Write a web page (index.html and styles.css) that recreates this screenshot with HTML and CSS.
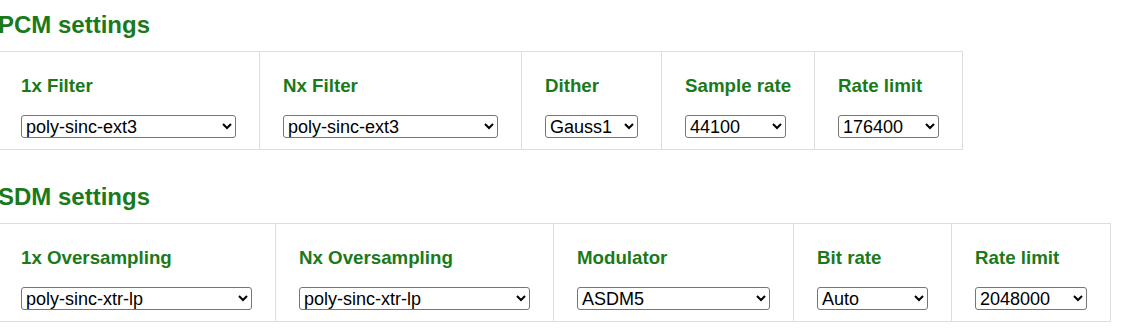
FILE: index.html
```html
<!DOCTYPE html>
<html lang="en">
<head>
  <meta charset="UTF-8" />
  <title>Settings</title>
  <link rel="stylesheet" href="styles.css">
</head>
<body>
  <div class="page">
    <section class="group">
      <h2>PCM settings</h2>
      <div class="row">
        <div class="cell">
          <label>1x Filter</label>
          <select class="w215"><option>poly-sinc-ext3</option></select>
        </div>
        <div class="cell">
          <label>Nx Filter</label>
          <select class="w215"><option>poly-sinc-ext3</option></select>
        </div>
        <div class="cell">
          <label>Dither</label>
          <select class="w93"><option>Gauss1</option></select>
        </div>
        <div class="cell">
          <label>Sample rate</label>
          <select class="w101"><option>44100</option></select>
        </div>
        <div class="cell">
          <label>Rate limit</label>
          <select class="w101"><option>176400</option></select>
        </div>
      </div>
    </section>

    <section class="group">
      <h2>SDM settings</h2>
      <div class="row">
        <div class="cell">
          <label>1x Oversampling</label>
          <select class="w231"><option>poly-sinc-xtr-lp</option></select>
        </div>
        <div class="cell">
          <label>Nx Oversampling</label>
          <select class="w231"><option>poly-sinc-xtr-lp</option></select>
        </div>
        <div class="cell">
          <label>Modulator</label>
          <select class="w193"><option>ASDM5</option></select>
        </div>
        <div class="cell">
          <label>Bit rate</label>
          <select class="w111"><option>Auto</option></select>
        </div>
        <div class="cell">
          <label>Rate limit</label>
          <select class="w112"><option>2048000</option></select>
        </div>
      </div>
    </section>
  </div>
</body>
</html>
```

FILE: styles.css
```css
* { margin: 0; padding: 0; box-sizing: border-box; }
body {
  font-family: 'Liberation Sans', Arial, sans-serif;
  background: #fff;
  color: #111;
}
.page {
  padding-top: 11px;
  margin-left: -3px;
}
.group + .group {
  margin-top: 33px;
}
.group h2 {
  font-size: 24px;
  line-height: 28px;
  font-weight: bold;
  color: #1a7a1a;
  margin: 0 0 12px 1px;
}
.row {
  display: inline-flex;
  border: 1px solid #dedede;
}
.cell {
  display: flex;
  flex-direction: column;
  align-items: flex-start;
  padding: 23px 23px 11px;
}
.cell + .cell {
  border-left: 1px solid #dedede;
}
.cell label {
  font-size: 18.72px;
  line-height: 22px;
  font-weight: bold;
  color: #1a7a1a;
  margin-bottom: 18px;
  white-space: nowrap;
}
.cell select {
  font-family: 'Liberation Sans', Arial, sans-serif;
  font-size: 18px;
  height: 23px;
  color: #000;
  background: #fff;
  border-radius: 3px;
}
.w93 { width: 93px; }
.w101 { width: 101px; }
.w111 { width: 111px; }
.w112 { width: 112px; }
.w193 { width: 193px; }
.w215 { width: 215px; }
.w231 { width: 231px; }
```
